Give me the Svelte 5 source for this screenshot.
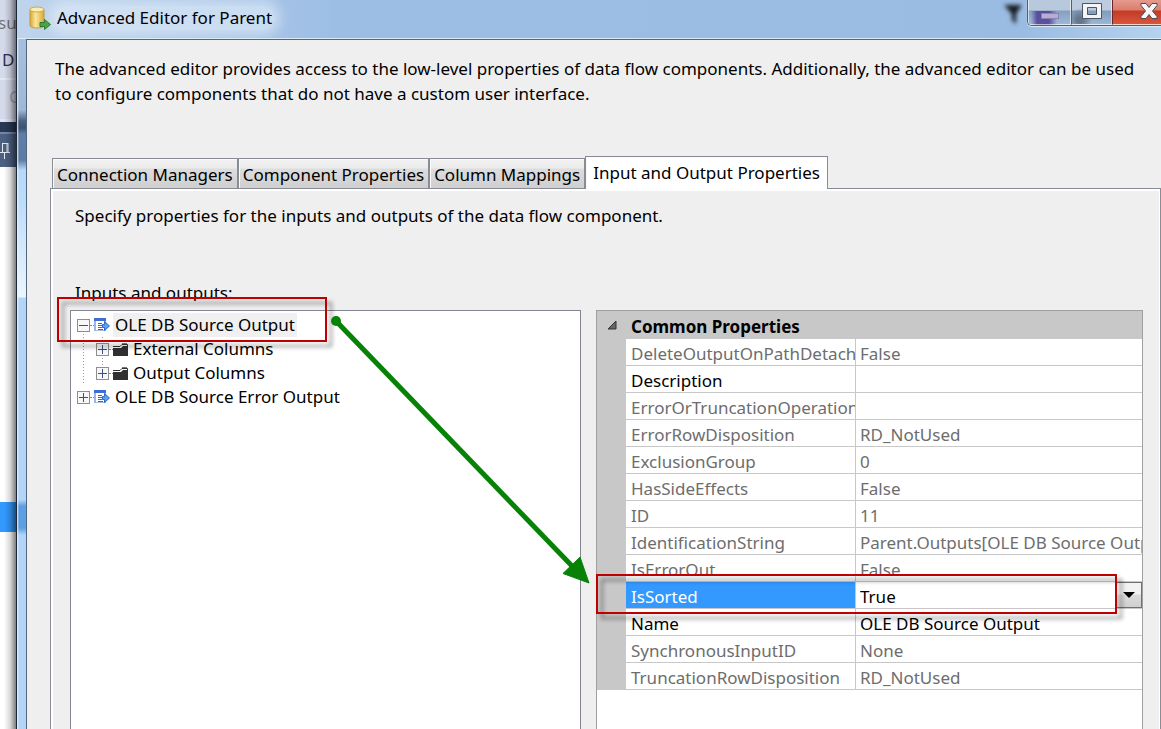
<script lang="ts">
  type Row = { name: string; value: string; kind?: 'text' | 'choice' };

  const tabs = ['Connection Managers', 'Component Properties', 'Column Mappings', 'Input and Output Properties'];
  let active = $state(3);

  const rows: Row[] = [
    { name: 'DeleteOutputOnPathDetached', value: 'False' },
    { name: 'Description', value: '', kind: 'text' },
    { name: 'ErrorOrTruncationOperation', value: '' },
    { name: 'ErrorRowDisposition', value: 'RD_NotUsed' },
    { name: 'ExclusionGroup', value: '0' },
    { name: 'HasSideEffects', value: 'False' },
    { name: 'ID', value: '11' },
    { name: 'IdentificationString', value: 'Parent.Outputs[OLE DB Source Output]' },
    { name: 'IsErrorOut', value: 'False' },
    { name: 'IsSorted', value: 'True', kind: 'choice' },
    { name: 'Name', value: 'OLE DB Source Output', kind: 'text' },
    { name: 'SynchronousInputID', value: 'None' },
    { name: 'TruncationRowDisposition', value: 'RD_NotUsed' }
  ];
</script>

{#snippet toggle(label: string, open: boolean)}
  <button class="toggle" aria-label={label}>
    <svg width="13" height="13" viewBox="0 0 13 13">
      <rect x=".5" y=".5" width="12" height="12" fill="#f7f7f7" stroke="#8e8e8e" />
      <path d={open ? 'M2 6.5h9' : 'M2 6.5h9M6.5 2v9'} stroke="#33508f" fill="none" />
    </svg>
  </button>
{/snippet}

{#snippet outputIcon()}
  <svg class="ico" width="16" height="14" viewBox="0 0 16 14" aria-hidden="true">
    <rect x=".5" y=".5" width="11" height="12" fill="#fff" stroke="#a9bbe0" />
    <path d="M0 0h12v3H0z" fill="#3c6fd6" />
    <path d="M0 3h2v10H0z" fill="#9db4e4" />
    <path d="M4 5.5h4M4 7.5h4M4 9.5h4M4 11.5h5" stroke="#5a6478" />
    <path d="M8.500 6.500h2V3.500l5 4.500-5 4.500v-3h-2z" fill="#5ba0f2" stroke="#2a66c4" />
  </svg>
{/snippet}

{#snippet folderIcon()}
  <svg class="ico" width="15" height="13" viewBox="0 0 15 13" aria-hidden="true">
    <path d="M0 5h8l2-2h5v10H0z" fill="#303030" />
    <path d="M0 3.500h7l2-2h5.500v2" fill="none" stroke="#303030" />
    <path d="M9 .5h5" stroke="#777" />
  </svg>
{/snippet}

<div class="screen">
  <aside class="behind" aria-hidden="true">
    <div class="bar first">su</div>
    <div class="bar second">D</div>
    <div class="bar third">C</div>
    <div class="navy"></div>
    <div class="pin">
      <svg width="10" height="18" viewBox="0 0 10 18"><path d="M2 1.500h6M2.500 1v9M7 1v9M8 1v9M0 10.500h10M4.500 11v6" stroke="#e4e9f3" fill="none" /></svg>
    </div>
    <div class="blank"></div>
    <div class="selected"></div>
    <div class="shade"></div>
  </aside>

  <main class="dialog">
    <header class="titlebar">
      <svg class="app" width="22" height="24" viewBox="0 0 22 24" aria-hidden="true">
        <defs>
          <linearGradient id="cyl"><stop offset="0" stop-color="#d7a63a" /><stop offset=".4" stop-color="#fbe79a" /><stop offset="1" stop-color="#d9a836" /></linearGradient>
        </defs>
        <path d="M1 3.500v16c0 1.600 3 2.500 7 2.500s7-.9 7-2.500v-16z" fill="url(#cyl)" stroke="#c4993c" />
        <ellipse cx="8" cy="3.500" rx="7" ry="2.500" fill="#fbeeb4" stroke="#cfa648" />
        <path d="M11 16.500h4.500v-3l6 5-6 5v-3H11z" fill="#4fa342" stroke="#2f7a2c" />
      </svg>
      <h1>Advanced Editor for Parent</h1>
      <svg class="ghost" width="30" height="34" viewBox="0 0 30 34" aria-hidden="true"><path d="M4 5h18l-6 9v10l-4-4v-6z" fill="#15191f" /></svg>
      <div class="window-buttons">
        <button class="min" aria-label="Minimize"><svg width="18" height="6" viewBox="0 0 18 6"><rect x=".5" y=".5" width="17" height="5" fill="#b9aed2" stroke="#8a83b0" /></svg></button>
        <button class="max" aria-label="Maximize"><svg width="20" height="16" viewBox="0 0 20 16"><path d="M.5 .5h19v15H.5zM5.500 4.500v7h9v-7z" fill="#f4f4f4" fill-rule="evenodd" stroke="#4a5468" /></svg></button>
        <button class="close" aria-label="Close"><svg width="18" height="16" viewBox="0 0 18 16"><path d="M1 .5h5L9 4.500l3-4h5v2L12.500 8l4.500 5.500v2h-5l-3-4-3 4H1v-2L5.500 8 1 2.500z" fill="#f6f6f6" stroke="#4f4a5c" /></svg></button>
      </div>
    </header>

    <div class="content">
      <p class="intro">The advanced editor provides access to the low-level properties of data flow components. Additionally, the advanced editor can be used to configure components that do not have a custom user interface.</p>

      <div class="tabs" role="tablist">
        {#each tabs as tab, i}
          <button role="tab" aria-selected={active === i} class:active={active === i} onclick={() => (active = i)}>{tab}</button>
        {/each}
      </div>

      <section class="panel">
        <p class="hint">Specify properties for the inputs and outputs of the data flow component.</p>
        <h2 id="tree-label">Inputs and outputs:</h2>

        <div class="columns">
          <div class="tree-box">
            <ul class="tree" role="tree" aria-labelledby="tree-label">
              <li role="treeitem" aria-selected="true" aria-expanded="true">
                <div class="node">{@render toggle('Collapse OLE DB Source Output', true)}<i></i>{@render outputIcon()}<span class="picked">OLE DB Source Output</span></div>
                <ul role="group">
                  <li role="treeitem" aria-selected="false"><div class="node">{@render toggle('Expand External Columns', false)}<i></i>{@render folderIcon()}<span>External Columns</span></div></li>
                  <li role="treeitem" aria-selected="false"><div class="node">{@render toggle('Expand Output Columns', false)}<i></i>{@render folderIcon()}<span>Output Columns</span></div></li>
                </ul>
              </li>
              <li role="treeitem" aria-selected="false"><div class="node">{@render toggle('Expand OLE DB Source Error Output', false)}<i></i>{@render outputIcon()}<span>OLE DB Source Error Output</span></div></li>
            </ul>
            <div class="callout on-tree"></div>
            <svg class="arrow" width="270" height="280" viewBox="0 0 270 280" aria-hidden="true">
              <circle cx="10" cy="10" r="5" fill="#078207" />
              <path d="M10 10L246 255" stroke="#078207" stroke-width="5" />
              <path d="M263 272L237 262.500 254 246z" fill="#078207" stroke="#078207" />
            </svg>
          </div>

          <div class="grid">
            <table>
              <colgroup><col class="gutter" /><col class="names" /><col /></colgroup>
              <thead>
                <tr>
                  <th class="fold"><button aria-label="Collapse Common Properties"><svg width="10" height="10" viewBox="0 0 10 10"><path d="M9 1v8H1z" fill="#666" stroke="#333" /></svg></button></th>
                  <th colspan="2" class="group">Common Properties</th>
                </tr>
              </thead>
              <tbody>
                {#each rows as row}
                  <tr class={row.kind ?? 'fixed'}>
                    <td class="gut"></td>
                    <th scope="row"><div class="clip">{row.name}</div></th>
                    <td>
                      {#if row.kind === 'choice'}
                        <div class="choice">
                          <select aria-label={row.name}><option>True</option><option>False</option></select>
                          <span class="drop"><svg width="12" height="6" viewBox="0 0 12 6"><path d="M0 0h12L6 6z" /></svg></span>
                          <div class="callout on-row"></div>
                        </div>
                      {:else if row.kind === 'text'}
                        <input type="text" aria-label={row.name} value={row.value} />
                      {:else}
                        <div class="clip">{row.value}</div>
                      {/if}
                    </td>
                  </tr>
                {/each}
              </tbody>
            </table>
          </div>
        </div>
      </section>
    </div>
  </main>
</div>

<style>
  :global(body) { margin: 0; overflow: hidden; }
  * { box-sizing: border-box; }
  .screen { display: flex; height: 100vh; overflow: hidden; font: 17px/24px 'Noto Sans', 'Open Sans', sans-serif; color: #000; background: #fff; }
  button, input, select { font: inherit; color: inherit; margin: 0; padding: 0; border: 0; background: none; border-radius: 0; }
  p, h1, h2, ul { margin: 0; padding: 0; font-size: inherit; font-weight: 400; }
  ul { list-style: none; }
  svg { display: block; flex: none; }

  .behind { position: relative; display: flex; flex-direction: column; flex: none; width: 16px; overflow: hidden; color: #27304f; }
  .bar { flex: none; height: 40px; background: #d5daea; line-height: 46px; overflow: hidden; }
  .first { color: #73757c; text-indent: -2px; }
  .second { border-bottom: 2px solid #e6e9f3; line-height: 40px; text-indent: 2px; }
  .third { height: 42px; color: #a3a7b2; line-height: 34px; text-indent: 9px; border-bottom: 3px solid #e1e5f0; }
  .navy { flex: none; height: 10px; background: #293955; }
  .pin { flex: none; height: 35px; padding-top: 8px; background: #4d6082; border-top: 2px solid #7487ab; }
  .blank { flex: none; height: 335px; }
  .selected { flex: none; height: 30px; background: #3399ff; }
  .shade { position: absolute; inset: 0 0 0 auto; width: 12px; background: linear-gradient(90deg, transparent, rgba(0, 0, 0, .15) 50%, rgba(0, 0, 0, .5)); }

  .dialog { flex: 1; min-width: 0; display: flex; flex-direction: column; border-left: 1px solid #1d2733; padding-left: 9px;
    background:
      linear-gradient(90deg, #eaf4fd, transparent 2px),
      linear-gradient(#a9c3e2 0, #9fb8d6 110px, #4b617f 121px, #3d5373 128px, #5f7fa8 134px, #5c7ca6 160px, #b6d9f9 170px, #bcdcfa 200px, #edf5fd 297px, #b2d4f8 298px, #b2d4f8 500px, #5c9fe4 506px, #5c9fe4 528px, #b2d4f8 535px); }
  .titlebar { flex: none; display: flex; align-items: flex-start; gap: 3px; height: 39px; margin-left: -9px; padding: 6px 0 0 12px; background: linear-gradient(90deg, #bfd4ec, #9dbee4 320px, #9bbce2 88%, #b5d2f0); border-bottom: 1px solid #d9ebf8; }
  h1 { padding: 0 3px; border-radius: 12px; background: rgba(225, 236, 248, .6); box-shadow: 0 0 12px 6px rgba(225, 236, 248, .6); }
  .app { position: relative; }
  .ghost { margin: -6px -6px 0 auto; filter: blur(2px); }
  .window-buttons { display: flex; height: 26px; margin-top: -6px; border: 1px solid #4e5d78; border-width: 0 0 1px 1px; border-radius: 0 0 0 5px; overflow: hidden; box-shadow: 0 1px 1px #dcebf8; }
  .window-buttons button { display: flex; align-items: flex-start; justify-content: center; height: 25px; border: 1px solid rgba(255, 255, 255, .6); border-top: 0; }
  .window-buttons .min { width: 43px; padding-top: 13px; background: linear-gradient(90deg, transparent 2px, rgba(76, 56, 146, .8) 8px, rgba(76, 56, 146, .8) 20px, transparent 28px) 0 11px no-repeat, linear-gradient(#b8c8dd 10px, #849fc0 11px, #9db8d7); }
  .window-buttons .max { width: 41px; padding-top: 3px; border-left-color: #4e5d78; background: radial-gradient(circle at 8px 20px, #64778b 3px, transparent 12px), linear-gradient(#bccbdd 10px, #829bbb 11px, #9bb6d6); }
  .window-buttons .close { width: 49px; padding: 3px 0 0 24px; border-left-color: #6b2626; border-right: 0; background: linear-gradient(#e59a8d, #dc7d6c 10px, #c53a25 11px, #d8563c); }

  .content { flex: 1; min-height: 0; display: flex; flex-direction: column; padding: 16px 0 0 23px; background: #efefef; border: 1px solid #52677d; border-width: 1px 0 0 1px; }
  .intro { flex: none; height: 100px; padding: 0 20px 0 5px; line-height: 25px; }
  .tabs { flex: none; display: flex; align-items: flex-end; height: 32px; padding-left: 2px; position: relative; z-index: 1; }
  .tabs button { height: 30px; padding: 2px 4px 0; white-space: nowrap; border: 1px solid #898c95; border-bottom: 0; background: linear-gradient(#f2f2f2, #ebebeb 9px, #dddddd 10px, #cfcfcf); box-shadow: inset 1px 1px #fafafa; }
  .tabs button.active { height: 33px; margin-bottom: -1px; padding: 0 7px; background: #fff; }
  .panel { flex: 1; min-height: 0; display: flex; flex-direction: column; padding: 15px 17px 0; border: 1px solid #898c95; border-bottom: 0; box-shadow: inset 2px 2px #fff, inset -1px 0 #fff; }
  .hint { flex: none; height: 77px; padding-left: 7px; }
  h2 { flex: none; height: 20px; margin-bottom: 9px; padding-left: 7px; overflow: hidden; }
  .columns { flex: 1; min-height: 0; display: grid; grid-template-columns: 511fr 547fr; gap: 15px; padding-left: 2px; }

  .tree-box { position: relative; z-index: 2; border: 1px solid #828790; border-bottom: 0; background: #fff; padding: 2px 0 0 6px; min-width: 0; }
  .tree > li:first-child { background: repeating-linear-gradient(#999 0 1px, transparent 1px 3px) 6px 18px / 1px 100% no-repeat; }
  .tree ul { padding-left: 19px; background: repeating-linear-gradient(#999 0 1px, transparent 1px 3px) 25px 0 / 1px 32px no-repeat; }
  .node { display: flex; align-items: center; height: 24px; white-space: nowrap; }
  .node i { width: 4px; border-top: 1px dotted #888; }
  .node span { padding: 0 2px; margin-left: 3px; }
  .picked { background: #f0f0f0; }
  .toggle { flex: none; cursor: pointer; }

  .callout { position: absolute; border: 2px solid #c00000; filter: drop-shadow(5px 5px 2px rgba(0, 0, 0, .45)); pointer-events: none; }
  .on-tree { left: -14px; top: -14px; width: 270px; height: 45px; }
  .arrow { position: absolute; left: 255px; top: 0; pointer-events: none; }

  .grid { min-width: 0; border: 1px solid #a0a0a0; border-bottom: 0; background: #fff; }
  table { width: 100%; table-layout: fixed; border-collapse: separate; border-spacing: 0; }
  .gutter { width: 29px; }
  .names { width: 230px; }
  th, td { padding: 0; text-align: left; font-weight: 400; }
  thead th { height: 28px; background: #c8c8c8; }
  thead .group { padding: 4px 0 0 5px; font-weight: 700; }
  .fold button { display: block; padding-left: 10px; }
  .gut { background: #c8c8c8; }
  tbody th, tbody td { height: 27px; white-space: nowrap; border-bottom: 1px solid #c8c8c8; }
  tbody .gut { border-bottom: 0; }
  tbody th { border-right: 1px solid #c8c8c8; }
  .clip { height: 26px; padding: 3px 0 0 4px; line-height: 23px; overflow: hidden; }
  th .clip { padding-left: 5px; }
  .fixed { color: #6d6d6d; }
  input { display: block; width: 100%; height: 26px; padding: 3px 0 0 4px; }
  .choice th { background: #3399ff; color: #fff; }
  div.choice { position: relative; display: flex; height: 26px; }
  select { flex: 1; min-width: 0; appearance: none; padding: 3px 0 0 4px; }
  .drop { display: grid; place-items: center; width: 26px; border: 1px solid #707070; background: linear-gradient(#f2f2f2 45%, #dcdcdc 50%, #cfcfcf); pointer-events: none; }
  .on-row { left: -260px; right: 25px; top: -8px; height: 40px; z-index: 3; }
</style>
